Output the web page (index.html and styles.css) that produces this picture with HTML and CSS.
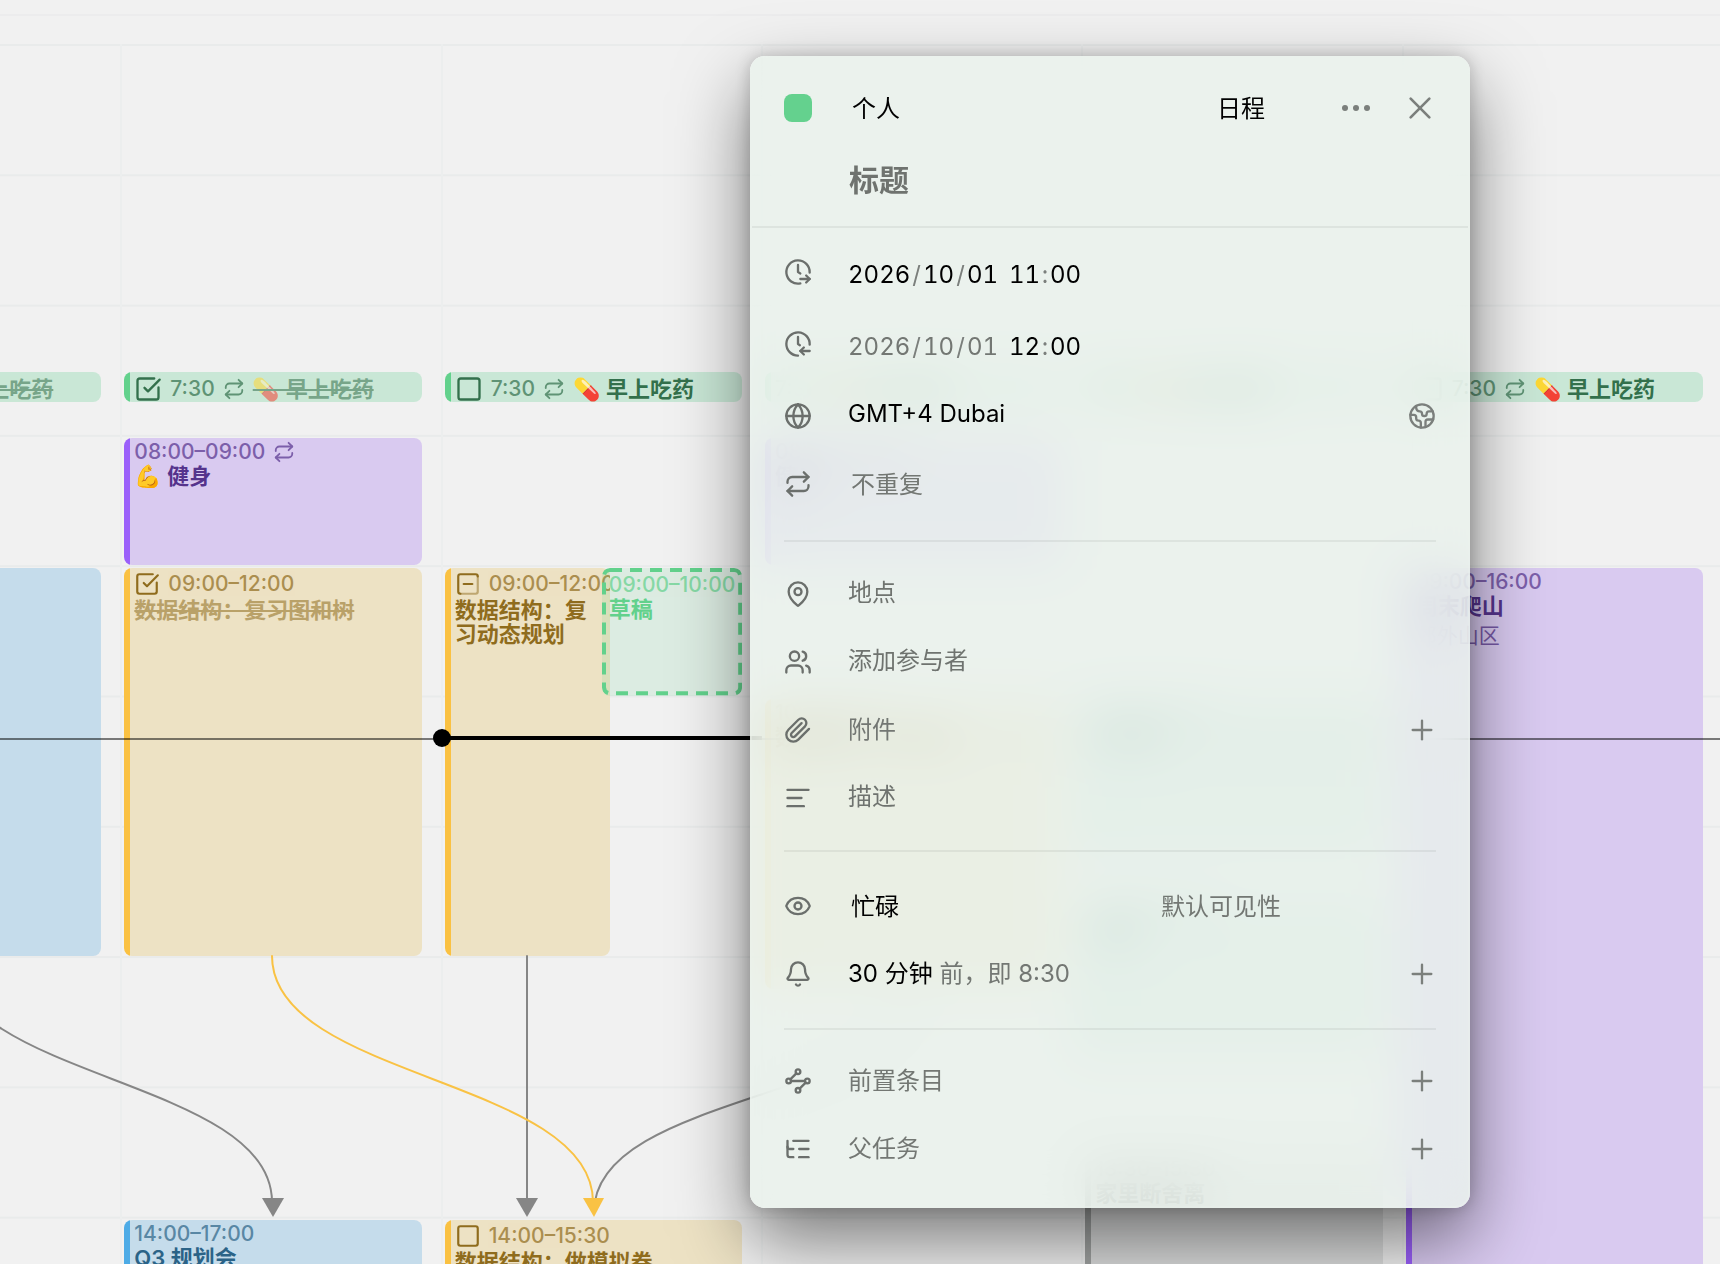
FILE: index.html
```
<!DOCTYPE html>
<html lang="zh-CN">
<head>
<meta charset="utf-8">
<meta name="viewport" content="width=device-width, initial-scale=1">
<title>日历</title>
<link rel="stylesheet" href="styles.css">
</head>
<body>
<svg class="sprite" aria-hidden="true">
  <symbol id="i-repeat" viewBox="0 0 24 24"><path d="m17 2 4 4-4 4"/><path d="M3 11v-1a4 4 0 0 1 4-4h14"/><path d="m7 22-4-4 4-4"/><path d="M21 13v1a4 4 0 0 1-4 4H3"/></symbol>
  <symbol id="i-box" viewBox="0 0 24 24"><rect x="3" y="3" width="18" height="18" rx="2"/></symbol>
  <symbol id="i-box-checked" viewBox="0 0 24 24"><path d="M21 10.656V19a2 2 0 0 1-2 2H5a2 2 0 0 1-2-2V5a2 2 0 0 1 2-2h12.344"/><path d="m9 11 3 3L22 4"/></symbol>
  <symbol id="i-box-partial" viewBox="0 0 24 24"><path opacity=".5" d="M21 5v14a2 2 0 0 1-2 2H5"/><path d="M5 21a2 2 0 0 1-2-2V5a2 2 0 0 1 2-2h14a2 2 0 0 1 2 2"/><path d="M8 12h8"/></symbol>
  <symbol id="i-start" viewBox="0 0 24 24"><path d="M14 21.8A10 10 0 1 1 22 12.5"/><path d="M12 6v6l2 1.2"/><path d="M14 18h8"/><path d="m19 15 3 3-3 3"/></symbol>
  <symbol id="i-end" viewBox="0 0 24 24"><path d="M12 22A10 10 0 1 1 22 12.5"/><path d="M12 6v6l1.6 1"/><path d="M22 18h-8"/><path d="m17 15-3 3 3 3"/></symbol>
  <symbol id="i-globe" viewBox="0 0 24 24"><circle cx="12" cy="12" r="10"/><path d="M12 2a14.5 14.5 0 0 0 0 20 14.5 14.5 0 0 0 0-20"/><path d="M2 12h20"/></symbol>
  <symbol id="i-earth" viewBox="0 0 24 24"><path d="M21.54 15H17a2 2 0 0 0-2 2v4.54"/><path d="M7 3.34V5a3 3 0 0 0 3 3a2 2 0 0 1 2 2c0 1.1.9 2 2 2a2 2 0 0 0 2-2c0-1.1.9-2 2-2h3.17"/><path d="M11 21.95V18a2 2 0 0 0-2-2a2 2 0 0 1-2-2v-1a2 2 0 0 0-2-2H2.05"/><circle cx="12" cy="12" r="10"/></symbol>
  <symbol id="i-pin" viewBox="0 0 24 24"><path d="M20 10c0 4.993-5.539 10.193-7.399 11.799a1 1 0 0 1-1.202 0C9.539 20.193 4 14.993 4 10a8 8 0 0 1 16 0"/><circle cx="12" cy="10" r="3"/></symbol>
  <symbol id="i-users" viewBox="0 0 24 24"><path d="M16 21v-2a4 4 0 0 0-4-4H6a4 4 0 0 0-4 4v2"/><circle cx="9" cy="7" r="4"/><path d="M22 21v-2a4 4 0 0 0-3-3.87"/><path d="M16 3.13a4 4 0 0 1 0 7.75"/></symbol>
  <symbol id="i-clip" viewBox="0 0 24 24"><path d="m21.44 11.05-9.19 9.19a6 6 0 0 1-8.49-8.49l8.57-8.57A4 4 0 1 1 18 8.84l-8.59 8.57a2 2 0 0 1-2.83-2.83l8.49-8.48"/></symbol>
  <symbol id="i-text" viewBox="0 0 24 24"><path d="M21 5H3"/><path d="M15 12H3"/><path d="M17 19H3"/></symbol>
  <symbol id="i-eye" viewBox="0 0 24 24"><path d="M2.062 12.348a1 1 0 0 1 0-.696 10.75 10.75 0 0 1 19.876 0 1 1 0 0 1 0 .696 10.75 10.75 0 0 1-19.876 0"/><circle cx="12" cy="12" r="3"/></symbol>
  <symbol id="i-bell" viewBox="0 0 24 24"><path d="M10.268 21a2 2 0 0 0 3.464 0"/><path d="M3.262 15.326A1 1 0 0 0 4 17h16a1 1 0 0 0 .74-1.673C19.41 13.956 18 12.499 18 8A6 6 0 0 0 6 8c0 4.499-1.411 5.956-2.738 7.326"/></symbol>
  <symbol id="i-nodes" viewBox="0 0 24 24"><path d="m10.586 5.414-5.172 5.172"/><path d="m18.586 13.414-5.172 5.172"/><path d="M6 12h12"/><circle cx="12" cy="20" r="2"/><circle cx="12" cy="4" r="2"/><circle cx="20" cy="12" r="2"/><circle cx="4" cy="12" r="2"/></symbol>
  <symbol id="i-tree" viewBox="0 0 24 24"><path d="M8 5h13"/><path d="M13 12h8"/><path d="M13 19h8"/><path d="M3 10a2 2 0 0 0 2 2h3"/><path d="M3 5v12a2 2 0 0 0 2 2h3"/></symbol>
  <symbol id="i-plus" viewBox="0 0 24 24"><path d="M4 12h16"/><path d="M12 4v16"/></symbol>
  <symbol id="i-close" viewBox="0 0 24 24"><path d="M5 5l14 14"/><path d="M19 5 5 19"/></symbol>
  <symbol id="i-dots" viewBox="0 0 32 32"><g fill="currentColor" stroke="none"><circle cx="5" cy="16" r="3"/><circle cx="16" cy="16" r="3"/><circle cx="27" cy="16" r="3"/></g></symbol>
</svg>

<main class="calendar">
  <div class="allday"></div>
  <div class="week">
    <section class="day">
      <article class="event green compact done" style="grid-row:11/12">
        <div class="line"><label class="check"><input type="checkbox" checked aria-label="早上吃药"><svg><use href="#i-box-checked"/></svg></label><time>7:30</time><svg class="rep"><use href="#i-repeat"/></svg><h3>💊 早上吃药</h3></div>
      </article>
      <article class="event blue" style="grid-row:17/29"></article>
    </section>

    <section class="day">
      <article class="event green compact done" style="grid-row:11/12">
        <div class="line"><label class="check"><input type="checkbox" checked aria-label="早上吃药"><svg><use href="#i-box-checked"/></svg></label><time>7:30</time><svg class="rep"><use href="#i-repeat"/></svg><h3>💊 早上吃药</h3></div>
      </article>
      <article class="event purple" style="grid-row:13/17">
        <div class="line"><time>08:00–09:00</time><svg class="rep"><use href="#i-repeat"/></svg></div>
        <h3>💪 健身</h3>
      </article>
      <article class="event yellow done" style="grid-row:17/29">
        <div class="line task"><label class="check"><input type="checkbox" checked aria-label="复习图和树"><svg><use href="#i-box-checked"/></svg></label><time>09:00–12:00</time></div>
        <h3>数据结构：复习图和树</h3>
      </article>
      <article class="event blue" style="grid-row:37/41">
        <div class="line"><time>14:00–17:00</time></div>
        <h3>Q3 规划会</h3>
      </article>
    </section>

    <section class="day split">
      <article class="event green compact" style="grid-row:11/12">
        <div class="line"><label class="check"><input type="checkbox" aria-label="早上吃药"><svg><use href="#i-box"/></svg></label><time>7:30</time><svg class="rep"><use href="#i-repeat"/></svg><h3>💊 早上吃药</h3></div>
      </article>
      <article class="event yellow first" style="grid-row:17/29">
        <div class="line task"><label class="check"><input type="checkbox" aria-label="复习动态规划"><svg><use href="#i-box-partial"/></svg></label><time>09:00–12:00</time></div>
        <h3>数据结构：复习动态规划</h3>
      </article>
      <article class="event draft" style="grid-row:17/21">
        <svg class="outline" aria-hidden="true"><rect rx="6"/></svg>
        <div class="line"><time>09:00–10:00</time></div>
        <h3>草稿</h3>
      </article>
      <article class="event yellow" style="grid-row:37/41">
        <div class="line task"><label class="check"><input type="checkbox" aria-label="做模拟卷"><svg><use href="#i-box"/></svg></label><time>14:00–15:30</time></div>
        <h3>数据结构：做模拟卷</h3>
      </article>
    </section>

    <section class="day">
      <article class="event green compact" style="grid-row:11/12"><div class="line"><time>7:30</time><h3>💊 早上吃药</h3></div></article>
      <article class="event purple" style="grid-row:13/17"><div class="line"><time>08:00–09:00</time></div><h3>健身</h3></article>
      <article class="event yellow" style="grid-row:21/30"><div class="line"><time>10:00–12:15</time></div><h3>数据结构：做习题</h3></article>
    </section>

    <section class="day">
      <article class="event green compact" style="grid-row:11/12"><div class="line"><time>7:30</time><h3>💊 早上吃药</h3></div></article>
      <article class="event teal" style="grid-row:21/26"><div class="line"><time>10:00–11:15</time></div><h3>大扫除</h3></article>
      <article class="event teal" style="grid-row:27/32"><div class="line"><time>11:30–12:45</time></div><h3>聚餐</h3></article>
      <article class="event gray" style="grid-row:35/41"><div class="line"><time>13:30–15:30</time></div><h3>家里断舍离</h3></article>
    </section>

    <section class="day">
      <article class="event green compact" style="grid-row:11/12">
        <div class="line"><label class="check"><input type="checkbox" aria-label="早上吃药"><svg><use href="#i-box"/></svg></label><time>7:30</time><svg class="rep"><use href="#i-repeat"/></svg><h3>💊 早上吃药</h3></div>
      </article>
      <article class="event purple" style="grid-row:17/41">
        <div class="line"><time>09:00–16:00</time></div>
        <h3>周末爬山</h3>
        <p>郊外山区</p>
      </article>
    </section>
  </div>

  <svg class="links" aria-hidden="true">
    <g fill="none" stroke="#868686" stroke-width="2">
      <path d="M-48 956C-48 1079 272 1079 272 1202"/>
      <path d="M913 989C913 1100 594 1092 594 1212"/>
      <path d="M527 956V1202"/>
      <path d="M272 956C272 1079 593 1079 593 1202" stroke="#f9c244"/>
    </g>
    <path d="M262 1198h22l-11 19z" fill="#868686"/>
    <path d="M516 1198h22l-11 19z" fill="#868686"/>
    <path d="M583 1198h21l-10 19z" fill="#f9c244"/>
  </svg>
  <div class="now"></div>
  <div class="now-today"></div>

  <form class="panel" role="dialog" aria-label="新建日程">
    <header class="head">
      <div class="head-row">
        <span class="lead"><i class="swatch"></i></span>
        <select class="calendar-name" aria-label="日历"><option>个人</option></select>
        <select class="kind" aria-label="类型"><option>日程</option></select>
        <button type="button" class="icon-btn" aria-label="更多"><svg><use href="#i-dots"/></svg></button>
        <button type="button" class="icon-btn" aria-label="关闭"><svg><use href="#i-close"/></svg></button>
      </div>
      <input class="title" placeholder="标题" aria-label="标题">
    </header>

    <section class="group when">
      <div class="row tall">
        <svg class="icon"><use href="#i-start"/></svg>
        <div class="stamp" role="group" aria-label="开始">
          <input class="year" value="2026" aria-label="年"><i>/</i><input value="10" aria-label="月"><i>/</i><input value="01" aria-label="日"><span class="space"></span><input value="11" aria-label="时"><i class="colon">:</i><input value="00" aria-label="分">
        </div>
      </div>
      <div class="row tall">
        <svg class="icon"><use href="#i-end"/></svg>
        <div class="stamp" role="group" aria-label="结束">
          <input class="year dim" value="2026" aria-label="年"><i>/</i><input class="dim" value="10" aria-label="月"><i>/</i><input class="dim" value="01" aria-label="日"><span class="space"></span><input value="12" aria-label="时"><i class="colon">:</i><input value="00" aria-label="分">
        </div>
      </div>
      <div class="row">
        <svg class="icon"><use href="#i-globe"/></svg>
        <button type="button" class="value">GMT+4 Dubai</button>
        <button type="button" class="add" aria-label="添加时区"><svg class="icon"><use href="#i-earth"/></svg></button>
      </div>
      <div class="row">
        <svg class="icon"><use href="#i-repeat"/></svg>
        <select class="muted" aria-label="重复"><option>不重复</option></select>
      </div>
    </section>

    <section class="group">
      <div class="row"><svg class="icon"><use href="#i-pin"/></svg><input class="field" placeholder="地点" aria-label="地点"></div>
      <div class="row"><svg class="icon"><use href="#i-users"/></svg><input class="field" placeholder="添加参与者" aria-label="添加参与者"></div>
      <div class="row"><svg class="icon"><use href="#i-clip"/></svg><span class="value muted">附件</span><button type="button" class="add" aria-label="添加附件"><svg class="icon"><use href="#i-plus"/></svg></button></div>
      <div class="row"><svg class="icon"><use href="#i-text"/></svg><input class="field" placeholder="描述" aria-label="描述"></div>
    </section>

    <section class="group status">
      <div class="row">
        <svg class="icon"><use href="#i-eye"/></svg>
        <select class="half" aria-label="状态"><option>忙碌</option></select>
        <select class="half muted" aria-label="可见性"><option>默认可见性</option></select>
      </div>
      <div class="row"><svg class="icon"><use href="#i-bell"/></svg><button type="button" class="value">30 分钟 <span class="muted">前，即 8:30</span></button><button type="button" class="add" aria-label="添加提醒"><svg class="icon"><use href="#i-plus"/></svg></button></div>
    </section>

    <section class="group">
      <div class="row"><svg class="icon"><use href="#i-nodes"/></svg><span class="value muted">前置条目</span><button type="button" class="add" aria-label="添加前置条目"><svg class="icon"><use href="#i-plus"/></svg></button></div>
      <div class="row"><svg class="icon"><use href="#i-tree"/></svg><span class="value muted">父任务</span><button type="button" class="add" aria-label="添加父任务"><svg class="icon"><use href="#i-plus"/></svg></button></div>
    </section>
  </form>
</main>
</body>
</html>
```
FILE: styles.css
```
* { box-sizing: border-box; }

body {
  margin: 0;
  background: #f1f1f1;
  color: #000;
  font-family: Inter, "Noto Sans CJK SC", "Noto Color Emoji", sans-serif;
  font-size: 24px;
}

h3, p { margin: 0; }

input, select, button {
  margin: 0;
  padding: 0;
  border: 0;
  background: none;
  color: inherit;
  font: inherit;
  appearance: none;
}

svg {
  fill: none;
  stroke: currentColor;
  stroke-width: 2;
  stroke-linecap: round;
  stroke-linejoin: round;
}

.sprite {
  position: absolute;
  width: 0;
  height: 0;
}

/* Calendar */

.calendar {
  position: relative;
  height: 100vh;
  overflow: hidden;
}

.allday {
  height: 16px;
  border-bottom: 2px solid #ececed;
}

.week {
  --line: #e9ebeb;
  display: grid;
  grid-template-columns: repeat(6, 1fr);
  width: calc(100% + 202px);
  margin: 28px 0 0 -200px;
}

.day {
  display: grid;
  grid-template-rows: repeat(40, 1fr);
  grid-template-columns: 100%;
  height: 1303px;
  padding: 0 19px 0 2px;
  border-left: 2px solid #eceeee;
  background: linear-gradient(var(--line) 2px, transparent 2px) 0 0 / 100% 10%;
}

.day.split { grid-template-columns: 157fr 8fr 132fr; }
.split .event { grid-column: 1 / -1; }
.split .first { grid-column: 1 / 3; }
.split .draft { grid-column: 2 / 4; }

.event {
  min-width: 0;
  min-height: 0;
  margin-top: 3px;
  padding: 2px 4px 0 10px;
  border-radius: 8px;
  overflow: hidden;
  background: linear-gradient(to right, var(--bar) 6px, var(--fill) 6px);
  color: var(--ink);
}

.event h3 {
  font-size: 22px;
  font-weight: 600;
  line-height: 24px;
}

.event p {
  padding-top: 4px;
  font-size: 21px;
  line-height: 28px;
  opacity: 0.75;
}

.line {
  display: flex;
  align-items: center;
  gap: 8px;
  height: 24px;
  white-space: nowrap;
}

.line.task { height: 28px; }

.line time {
  font-size: 21px;
  font-weight: 500;
  line-height: 24px;
  opacity: 0.7;
}

.rep {
  flex: none;
  width: 22px;
  height: 22px;
  opacity: 0.7;
}

.check {
  position: relative;
  flex: none;
  display: flex;
}

.check svg {
  width: 26px;
  height: 26px;
}

.check input {
  position: absolute;
  inset: 0;
  opacity: 0;
}

.compact { margin-top: 2px; }
.compact .line { height: 30px; }
.compact .check svg { width: 28px; height: 28px; }

.done h3 {
  opacity: 0.55;
  text-decoration: line-through;
}

.green { --bar: #62d18c; --fill: #c9e7d6; --ink: #33704c; }
.purple { --bar: #9a5ffa; --fill: #d9caf0; --ink: #55338c; }
.yellow { --bar: #fac142; --fill: #ede2c4; --ink: #8f6c1d; }
.blue { --bar: #4dabe6; --fill: #c5dceb; --ink: #2b6387; }
.teal { --bar: #7cc9b0; --fill: #cfe5de; --ink: #2f6b58; }
.gray { --bar: #a0a3a2; --fill: #dcdddd; --ink: #666; }

.draft {
  position: relative;
  padding: 5px 0 0 7px;
  background: rgba(98, 209, 140, 0.15);
  color: #62d18c;
}

.outline {
  position: absolute;
  inset: 0;
  width: 100%;
  height: 100%;
}

.outline rect {
  x: 2px;
  y: 2px;
  width: calc(100% - 4px);
  height: calc(100% - 4px);
  stroke: #62d18c;
  stroke-width: 4;
  stroke-linecap: butt;
  stroke-dasharray: 12 8;
}

.links {
  position: absolute;
  inset: 0;
  width: 100%;
  height: 100%;
}

.links path[fill] { stroke: none; }

.now,
.now-today {
  position: absolute;
  top: 738px;
  left: 0;
  right: 0;
  height: 2px;
  background: rgba(0, 0, 0, 0.5);
}

.now-today {
  top: 736px;
  left: 442px;
  right: auto;
  width: 320px;
  height: 4px;
  background: #000;
}

.now-today::before {
  content: "";
  position: absolute;
  top: -7px;
  left: -9px;
  width: 18px;
  height: 18px;
  border-radius: 50%;
  background: #000;
}

/* Event editor */

.panel {
  position: absolute;
  top: 56px;
  left: 750px;
  z-index: 1;
  width: 720px;
  border: 2px solid rgba(255, 255, 255, 0.5);
  border-radius: 15px;
  box-shadow: 0 32px 72px rgba(0, 0, 0, 0.5), 0 0 16px rgba(0, 0, 0, 0.2);
}

.panel::before,
.panel::after {
  content: "";
  position: absolute;
  inset: -2px;
  z-index: -1;
  border-radius: 15px;
}

/* The blur fades out near its own edge, so it starts left of the panel and is clipped back. */
.panel::before {
  left: -50px;
  backdrop-filter: blur(24px);
  clip-path: inset(0 0 0 48px round 15px);
}

.panel::after { background: rgba(233, 241, 235, 0.82); }

.head {
  padding: 18px 32px 6px;
  border-bottom: 2px solid rgba(0, 0, 0, 0.06);
}

.head-row {
  display: flex;
  align-items: center;
  height: 64px;
}

.lead { width: 68px; }

.swatch {
  display: block;
  width: 28px;
  height: 28px;
  border-radius: 8px;
  background: #64d18e;
}

.calendar-name { width: 365px; }
.kind { width: 107px; }

.icon-btn {
  display: grid;
  place-items: center;
  width: 64px;
  height: 64px;
  color: #7b7f7c;
}

.head-row > * { flex: none; }

.icon-btn svg {
  width: 32px;
  height: 32px;
}

.title {
  display: block;
  width: calc(100% - 65px);
  height: 80px;
  margin-left: 65px;
  font-size: 30px;
  font-weight: 600;
}

::placeholder { color: #6f736f; opacity: 1; }

.group {
  margin: 0 32px;
  padding: 18px 0;
  border-bottom: 2px solid rgba(0, 0, 0, 0.06);
}

.group.when { padding: 10px 0 22px; }
.group.status { padding: 20px 0; }
.group:last-child { padding: 17px 0 23px; border: 0; }

.row {
  display: flex;
  align-items: center;
  gap: 36px;
  height: 68px;
}

.row.tall { height: 72px; }
.row.tall .icon { margin-bottom: 4px; }

.icon {
  flex: none;
  width: 28px;
  height: 28px;
  color: #6b6f6c;
}

.value, .field {
  flex: 1;
  min-width: 0;
  text-align: left;
}

.value { padding-bottom: 6px; }
.field { padding-bottom: 4px; }

.muted { color: #737773; }
.half { width: 274px; }

.row select { padding-left: 3px; }

.add {
  display: flex;
  color: #7b7f7c;
}

.add .icon { color: inherit; }

.stamp {
  display: flex;
  align-items: center;
  color: #7b7f7c;
  font-variant-numeric: tabular-nums;
}

.stamp i { width: 13px; font-style: normal; text-align: center; }
.stamp .colon { width: 10px; }
.stamp .space { width: 11px; }
.stamp input { width: 31px; color: #000; }
.stamp .year { width: 62px; }
.stamp .dim { color: #737773; }
```
